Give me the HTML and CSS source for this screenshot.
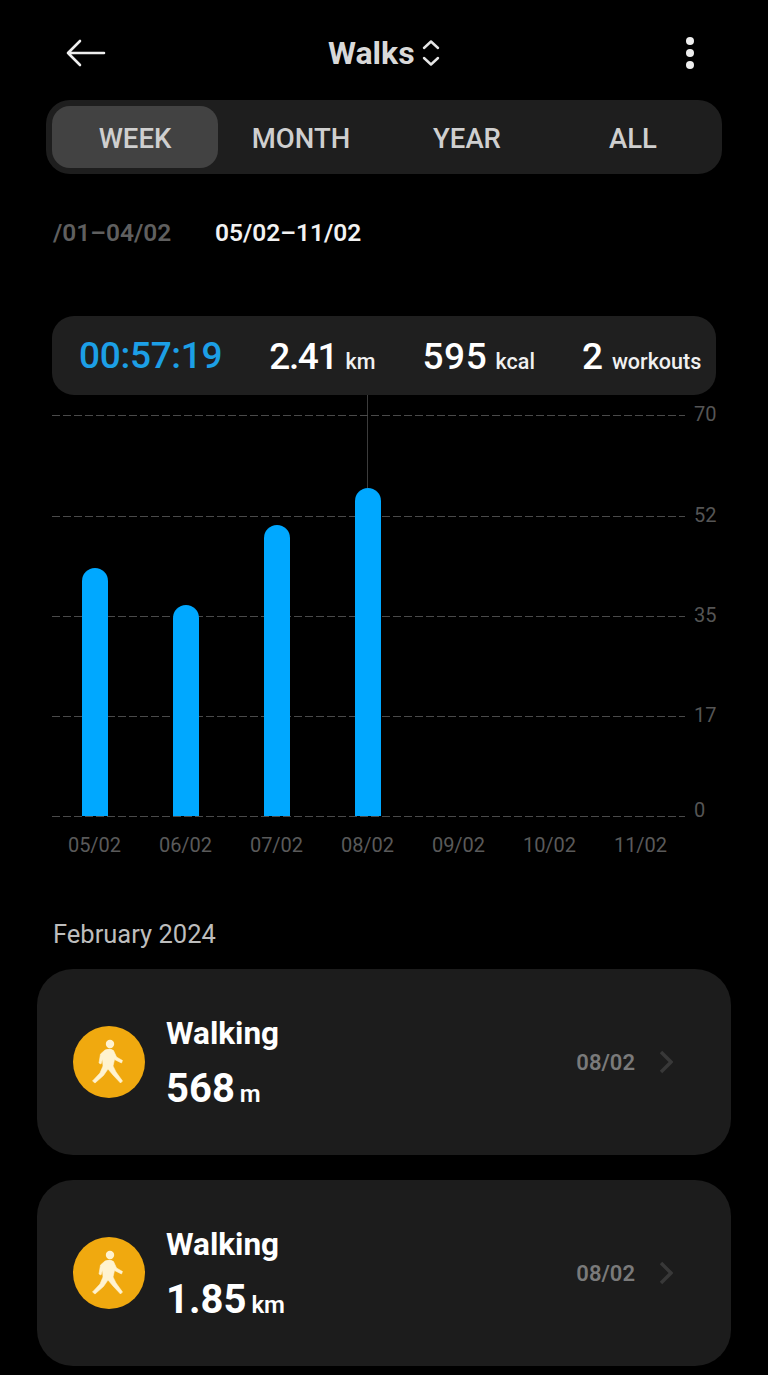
FILE: index.html
```html
<!DOCTYPE html>
<html lang="en">
<head>
<meta charset="utf-8">
<title>Walks</title>
<link rel="stylesheet" href="styles.css">
</head>
<body>
<div class="page">
  <header class="topbar">
    <svg class="back" width="40" height="28" viewBox="0 0 40 28"><path d="M14 2 L2 14 L14 26 M2 14 H38" fill="none" stroke="#eee" stroke-width="2.6" stroke-linecap="round" stroke-linejoin="round"/></svg>
    <div class="title"><span>Walks</span>
      <svg width="20" height="28" viewBox="0 0 20 28"><path d="M3 9 L10 2.5 L17 9 M3 19 L10 25.5 L17 19" fill="none" stroke="#e6e6e6" stroke-width="2.4" stroke-linecap="round" stroke-linejoin="round"/></svg>
    </div>
    <div class="more"><i></i><i></i><i></i></div>
  </header>

  <nav class="tabs">
    <div class="tab active">WEEK</div>
    <div class="tab">MONTH</div>
    <div class="tab">YEAR</div>
    <div class="tab">ALL</div>
  </nav>

  <div class="dates">
    <div class="date-prev"><span>/01–04/02</span></div>
    <div class="date-cur">05/02–11/02</div>
  </div>

  <section class="summary">
    <span class="time">00:57:19</span>
    <span class="stat s1"><b>2.41</b> km</span>
    <span class="stat"><b>595</b> kcal</span>
    <span class="stat"><b>2</b> workouts</span>
  </section>

  <section class="chart">
    <div class="plot">
      <div class="cursor"></div>
      <div class="grid g1"></div>
      <div class="grid g2"></div>
      <div class="grid g3"></div>
      <div class="grid g4"></div>
      <div class="grid g5"></div>
      <span class="ylabel y1">70</span>
      <span class="ylabel y2">52</span>
      <span class="ylabel y3">35</span>
      <span class="ylabel y4">17</span>
      <span class="ylabel y5">0</span>
      <div class="bars">
        <div class="col"><div class="bar" style="height:248px"></div></div>
        <div class="col"><div class="bar" style="height:211px"></div></div>
        <div class="col"><div class="bar" style="height:291px"></div></div>
        <div class="col"><div class="bar" style="height:328px"></div></div>
        <div class="col"></div>
        <div class="col"></div>
        <div class="col"></div>
      </div>
    </div>
    <div class="xlabels">
      <span>05/02</span><span>06/02</span><span>07/02</span><span>08/02</span><span>09/02</span><span>10/02</span><span>11/02</span>
    </div>
  </section>

  <h2 class="month">February 2024</h2>

  <article class="card">
    <div class="badge"><svg width="46" height="50" viewBox="0 0 46 50"><circle cx="24" cy="7" r="4.2" fill="#fff3d0"/><path d="M19 13 Q24 11 27.5 13.5 L30.5 20 L36.5 23.5 L35.5 26 L28.5 22.5 L27 29 L30 35 L36.5 44 L34.5 46 L27 38 L22 32 L17.5 38.5 L9 46 L6.5 44 L14 36 L17 29 L16.5 22 L15 27 L13 26 L14.5 17 Z" fill="#fff3d0" stroke="#fff3d0" stroke-width=".6" stroke-linejoin="round"/></svg></div>
    <div class="info">
      <div class="name">Walking</div>
      <div class="value"><b>568</b> m</div>
    </div>
    <div class="when">08/02</div>
    <svg class="chev" width="14" height="24" viewBox="0 0 14 24"><path d="M2 2 L12 12 L2 22" fill="none" stroke="#383838" stroke-width="3.4"/></svg>
  </article>

  <article class="card">
    <div class="badge"><svg width="46" height="50" viewBox="0 0 46 50"><circle cx="24" cy="7" r="4.2" fill="#fff3d0"/><path d="M19 13 Q24 11 27.5 13.5 L30.5 20 L36.5 23.5 L35.5 26 L28.5 22.5 L27 29 L30 35 L36.5 44 L34.5 46 L27 38 L22 32 L17.5 38.5 L9 46 L6.5 44 L14 36 L17 29 L16.5 22 L15 27 L13 26 L14.5 17 Z" fill="#fff3d0" stroke="#fff3d0" stroke-width=".6" stroke-linejoin="round"/></svg></div>
    <div class="info">
      <div class="name">Walking</div>
      <div class="value"><b>1.85</b> km</div>
    </div>
    <div class="when">08/02</div>
    <svg class="chev" width="14" height="24" viewBox="0 0 14 24"><path d="M2 2 L12 12 L2 22" fill="none" stroke="#383838" stroke-width="3.4"/></svg>
  </article>
</div>
</body>
</html>
```
FILE: styles.css
```css
* { box-sizing: border-box; }
html, body { margin: 0; padding: 0; background: #000; }
body { font-family: Roboto, "Liberation Sans", sans-serif; color: #fff; }
.page { width: 768px; height: 1375px; overflow: hidden; }

.topbar { height: 100px; padding: 6px 0 0 66px; display: flex; align-items: center; }
.title { display: flex; align-items: center; gap: 6px; font-size: 32px; font-weight: 700; color: #d9d9d9; margin-left: 222px; }
.more { display: flex; flex-direction: column; gap: 4px; margin-left: 245px; }
.more i { display: block; width: 8px; height: 8px; border-radius: 50%; background: #eee; }

.tabs { margin: 0 46px; height: 74px; padding: 6px; display: grid; grid-template-columns: repeat(4, 166px); background: #1e1e1e; border-radius: 24px; }
.tab { display: flex; align-items: center; justify-content: center; padding-top: 3px; font-size: 27.5px; font-weight: 500; color: #cfcfcf; border-radius: 18px; }
.tab.active { background: #424242; }

.dates { margin-top: 42px; height: 32px; display: flex; align-items: center; font-size: 24.5px; font-weight: 600; padding-left: 53px; gap: 45px; }
.date-prev { width: 117px; white-space: nowrap; color: #5f5f5f; }
.date-cur { color: #f2f2f2; }

.summary { margin: 68px 52px 0; height: 79px; border-radius: 22px; background: #1f1f1f; display: flex; align-items: center; gap: 47px; padding: 0 26px 0 27px; }
.time { font-size: 37px; font-weight: 500; letter-spacing: -.3px; color: #1c9fe6; }
.stat { font-size: 21.5px; font-weight: 500; color: #f0f0f0; padding-top: 2px; white-space: nowrap; }
.stat b { font-size: 37px; font-weight: 500; color: #fff; margin-right: 3px; letter-spacing: .6px; }
.s1 b { letter-spacing: -1.4px; }

.chart { padding-left: 49px; }
.plot { position: relative; height: 421px; }
.cursor { position: absolute; left: 318px; top: 0; width: 1px; height: 93px; background: #3c3c3c; }
.grid { position: absolute; left: 3px; width: 633px; height: 1px; background: repeating-linear-gradient(90deg, #4a4a4a 0 8px, transparent 8px 11px); }
.g1 { top: 20px; } .g2 { top: 121px; } .g3 { top: 221px; } .g4 { top: 321px; } .g5 { top: 421px; }
.ylabel { position: absolute; left: 645px; font-size: 20px; line-height: 24px; color: #555; }
.y1 { top: 7px; } .y2 { top: 108px; } .y3 { top: 208px; } .y4 { top: 308px; } .y5 { top: 403px; }
.bars { position: absolute; left: 0; bottom: 0; height: 100%; display: flex; align-items: flex-end; width: 637px; }
.col { width: 91px; display: flex; justify-content: center; }
.bar { width: 26px; background: #00a8ff; border-radius: 13px 13px 0 0; }
.xlabels { display: flex; margin-top: 17px; }
.xlabels span { width: 91px; text-align: center; font-size: 20px; line-height: 24px; color: #5a5a5a; }

.month { margin: 61px 0 0 53px; height: 32px; font-size: 25.5px; line-height: 32px; font-weight: 400; color: #bdbdbd; }

.card { margin: 19px 37px 0; height: 186px; border-radius: 36px; background: #1c1c1c; display: flex; align-items: center; padding: 0 58px 0 36px; }
.card + .card { margin-top: 25px; }
.badge { width: 72px; height: 72px; border-radius: 50%; background: #f0a90f; display: flex; align-items: center; justify-content: center; margin-right: 21px; }
.info { flex: 1; padding-top: 9px; }
.name { font-size: 31.5px; line-height: 38px; font-weight: 700; }
.value { font-size: 24px; line-height: 50px; font-weight: 600; margin-top: 11px; }
.value b { font-size: 40px; font-weight: 700; margin-right: -1px; }
.when { font-size: 22px; font-weight: 600; color: #7a7a7a; margin-right: 24px; }
.chev { display: block; }
```
